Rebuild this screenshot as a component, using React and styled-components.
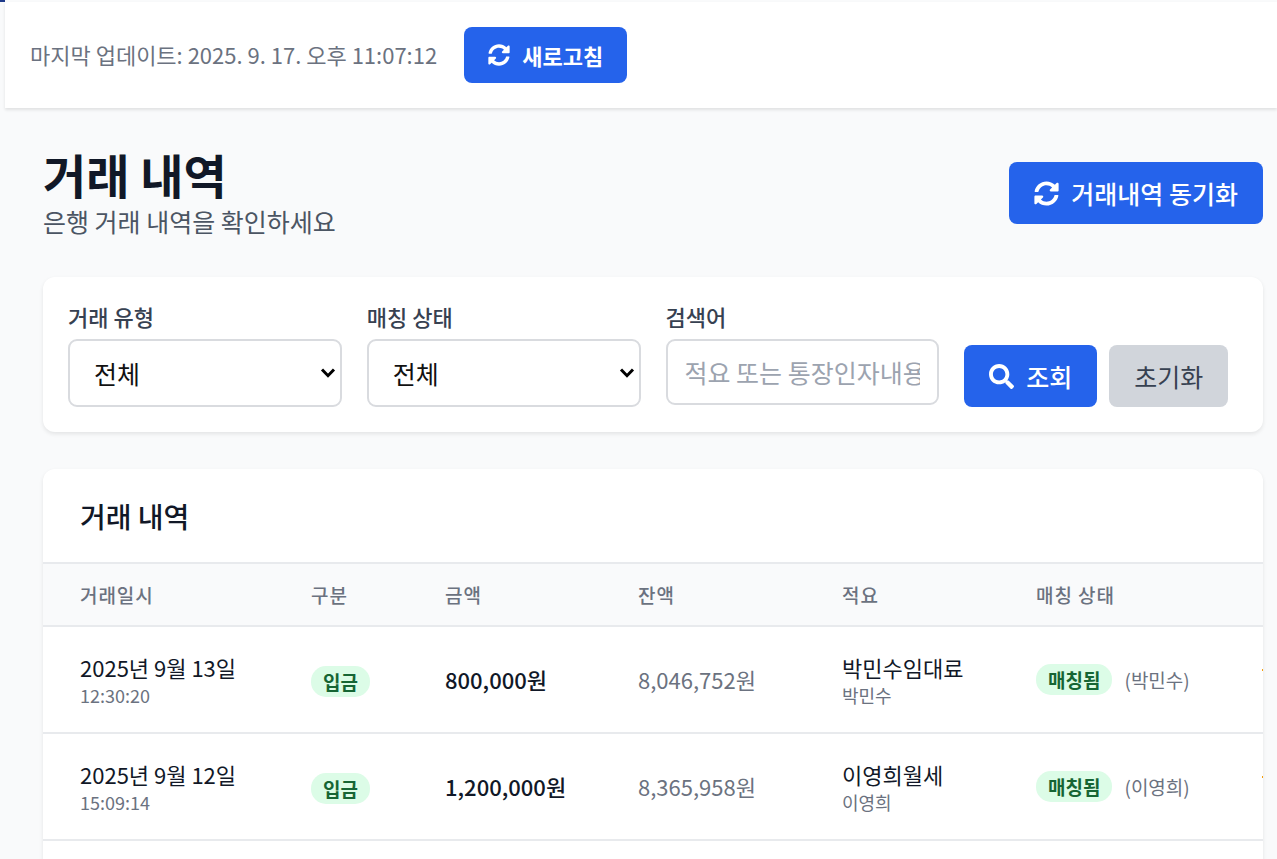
import React from "react";
import styled, { createGlobalStyle, css } from "styled-components";
import { FaSearch } from "react-icons/fa";

const GlobalStyle = createGlobalStyle`
  *, *::before, *::after { box-sizing: border-box; }
  html, body { margin: 0; background: #f9fafb; }
  body, button, input, select {
    font-family: "Noto Sans CJK KR", "Noto Sans", sans-serif;
  }
  body { overflow: hidden; color: #111827; }
  h1, h2, p { margin: 0; }
`;

const Shell = styled.div`
  display: flex;
  height: 100vh;
  overflow: hidden;
`;

const SidebarEdge = styled.div`
  flex: none;
  width: 5px;
  border-top: 2px solid #1e3a8a;
`;

const Content = styled.div`
  flex: 1;
  min-width: 0;
  padding-top: 2px;
`;

const TopBar = styled.header`
  display: flex;
  align-items: center;
  gap: 27px;
  padding: 25px;
  background: #fff;
  box-shadow: 0 2px 3px rgba(0, 0, 0, 0.1);
`;

const UpdatedAt = styled.span`
  font-size: 22px;
  line-height: 30px;
  padding-bottom: 2px;
  color: #6b7280;
`;

const tones = {
  primary: css`
    background: #2563eb;
    color: #fff;
  `,
  muted: css`
    background: #d1d5db;
    color: #374151;
    font-weight: 400;
  `,
};

const Button = styled.button`
  display: inline-flex;
  align-items: center;
  gap: 12px;
  border: 0;
  border-radius: 8px;
  padding: ${(p) => (p.$small ? "12px 24px" : "12px 25px")};
  font-size: ${(p) => (p.$small ? "22px" : "25px")};
  line-height: ${(p) => (p.$small ? "32px" : "38px")};
  font-weight: ${(p) => (p.$small ? 700 : 500)};
  white-space: nowrap;
  cursor: pointer;
  ${(p) => tones[p.$tone || "primary"]}

  svg {
    flex: none;
  }
`;

const Main = styled.main`
  padding: 37px 14px 0 38px;
`;

const PageHead = styled.div`
  display: flex;
  justify-content: space-between;
  align-items: center;
  margin-bottom: 36px;
`;

const PageTitle = styled.h1`
  font-size: 47px;
  line-height: 58px;
  font-weight: 700;
`;

const PageNote = styled.p`
  font-size: 25px;
  line-height: 36px;
  padding-bottom: 2px;
  color: #4b5563;
`;

const Card = styled.section`
  background: #fff;
  border-radius: 12px;
  box-shadow: 0 2px 4px rgba(0, 0, 0, 0.09);
  overflow: hidden;
`;

const Filters = styled(Card).attrs({ as: "form" })`
  display: grid;
  grid-template-columns: repeat(4, minmax(0, 1fr));
  gap: 25px;
  padding: 25px;
  margin-bottom: 37px;
`;

const Field = styled.div`
  display: flex;
  flex-direction: column;
`;

const Label = styled.label`
  font-size: 22px;
  line-height: 28px;
  margin-bottom: 9px;
  font-weight: 500;
  color: #374151;
`;

const control = css`
  width: 100%;
  border: 2px solid #d9dbdf;
  border-radius: 9px;
  background: #fff;
  font-size: 25px;
`;

const SelectWrap = styled.div`
  display: grid;
  align-items: center;

  > * {
    grid-area: 1 / 1;
  }

  > svg {
    justify-self: end;
    margin-right: 6px;
    pointer-events: none;
  }
`;

const Select = styled.select`
  ${control}
  appearance: none;
  height: 68px;
  padding: 0 24px;
  color: #111;
`;

const Input = styled.input`
  ${control}
  height: 66px;
  padding: 0 17px;

  &::placeholder {
    color: #9ca3af;
    opacity: 1;
  }
`;

const Actions = styled.div`
  display: flex;
  align-items: flex-end;
  gap: 12px;
`;

const CardHead = styled.div`
  padding: 25px 37px 24px;
  border-bottom: 2px solid #e8eaed;
`;

const CardTitle = styled.h2`
  font-size: 28px;
  line-height: 44px;
  font-weight: 500;
`;

const TableScroll = styled.div`
  overflow: hidden;
`;

const Table = styled.table`
  table-layout: fixed;
  width: 100%;
  min-width: 1380px;
  border-collapse: collapse;
`;

const Col = styled.col`
  width: ${(p) => p.$w};
`;

const Th = styled.th`
  padding: 18px 37px;
  background: #f9fafb;
  border-bottom: 2px solid #e8eaed;
  font-size: 19px;
  line-height: 25px;
  font-weight: 500;
  letter-spacing: 0.05em;
  text-align: left;
  white-space: nowrap;
  color: #6b7280;
`;

const Td = styled.td`
  height: 107px;
  padding: 0 37px;
  border-bottom: 2px solid #e8eaed;
  white-space: nowrap;
  font-size: 22px;
  line-height: 31px;
  font-weight: ${(p) => (p.$strong ? 500 : 400)};
  color: ${(p) => (p.$quiet ? "#6b7280" : "#111827")};
`;

const SubLine = styled.div`
  font-size: 18px;
  line-height: 24px;
  color: #6b7280;
`;

const Match = styled.div`
  display: flex;
  align-items: center;
  gap: 12px;
`;

const Badge = styled.span`
  display: inline-block;
  padding: 0 12px;
  border-radius: 15px;
  background: #dcfce7;
  color: #166534;
  font-size: 19px;
  line-height: 31px;
  font-weight: 600;
  vertical-align: middle;
`;

const MatchName = styled.span`
  font-size: 19px;
  line-height: 31px;
  color: #6b7280;
`;

const IconButton = styled.button`
  display: block;
  border: 0;
  padding: 0;
  background: none;
  color: #f59e0b;
  cursor: pointer;
`;

function SyncIcon({ size }) {
  return (
    <svg width={size} height={size} viewBox="0 0 512 512" fill="currentColor" aria-hidden="true">
      <path d="M370.7 133.3C339.5 104 298.9 88 255.8 88c-77.500.1-144.300 53.200-162.800 126.900-1.300 5.400-6.100 9.100-11.700 9.100H24.100c-7.500 0-13.200-6.800-11.800-14.200C33.900 94.900 134.800 8 256 8c66.400 0 126.800 26.100 171.300 68.700L463 41C478.100 25.900 504 36.600 504 57.900V192c0 13.300-10.700 24-24 24H345.900c-21.400 0-32.100-25.900-17-41zM32 296h134.100c21.400 0 32.100 25.900 17 41l-41.800 41.800c31.300 29.300 71.800 45.300 114.900 45.300 77.400-.1 144.300-53.100 162.800-126.800 1.300-5.400 6.100-9.100 11.700-9.100h57.300c7.500 0 13.200 6.800 11.800 14.200C478.100 417.100 377.200 504 256 504c-66.400 0-126.800-26.100-171.300-68.700L49 471c-15.100 15.100-41 4.400-41-17V320c0-13.300 10.700-24 24-24z" />
    </svg>
  );
}

function Chevron() {
  return (
    <svg width="16" height="12" viewBox="0 0 16 12" fill="none" stroke="#000" strokeWidth="3" aria-hidden="true">
      <path d="M2 2.500 8 8.700 14 2.500" />
    </svg>
  );
}

function UnlinkIcon() {
  return (
    <svg width="22" height="22" viewBox="0 0 22 22" fill="none" stroke="currentColor" strokeWidth="2" aria-hidden="true">
      <path d="M0 3H8M14 3H21M4 17H18" />
    </svg>
  );
}

const rows = [
  { date: "2025년 9월 13일", time: "12:30:20", amount: "800,000원", balance: "8,046,752원", memo: "박민수임대료", name: "박민수" },
  { date: "2025년 9월 12일", time: "15:09:14", amount: "1,200,000원", balance: "8,365,958원", memo: "이영희월세", name: "이영희" },
];

const columns = [
  { label: "거래일시", width: "231px" },
  { label: "구분", width: "134px" },
  { label: "금액", width: "193px" },
  { label: "잔액", width: "204px" },
  { label: "적요", width: "194px" },
  { label: "매칭 상태", width: "226px" },
];

function SelectField({ id, label }) {
  return (
    <Field>
      <Label htmlFor={id}>{label}</Label>
      <SelectWrap>
        <Select id={id} defaultValue="all">
          <option value="all">전체</option>
        </Select>
        <Chevron />
      </SelectWrap>
    </Field>
  );
}

export default function App() {
  return (
    <>
      <GlobalStyle />
      <Shell>
        <SidebarEdge />
        <Content>
          <TopBar>
            <UpdatedAt>마지막 업데이트: 2025. 9. 17. 오후 11:07:12</UpdatedAt>
            <Button type="button" $small>
              <SyncIcon size={22} />
              새로고침
            </Button>
          </TopBar>
          <Main>
            <PageHead>
              <div>
                <PageTitle>거래 내역</PageTitle>
                <PageNote>은행 거래 내역을 확인하세요</PageNote>
              </div>
              <Button type="button">
                <SyncIcon size={25} />
                거래내역 동기화
              </Button>
            </PageHead>

            <Filters onSubmit={(e) => e.preventDefault()}>
              <SelectField id="type" label="거래 유형" />
              <SelectField id="status" label="매칭 상태" />
              <Field>
                <Label htmlFor="keyword">검색어</Label>
                <Input id="keyword" type="text" placeholder="적요 또는 통장인자내용" />
              </Field>
              <Actions>
                <Button type="submit">
                  <FaSearch size={25} />
                  조회
                </Button>
                <Button type="reset" $tone="muted">초기화</Button>
              </Actions>
            </Filters>

            <Card>
              <CardHead>
                <CardTitle>거래 내역</CardTitle>
              </CardHead>
              <TableScroll>
                <Table>
                  <colgroup>
                    {columns.map((c) => (
                      <Col key={c.label} $w={c.width} />
                    ))}
                    <Col $w="auto" />
                  </colgroup>
                  <thead>
                    <tr>
                      {columns.map((c) => (
                        <Th key={c.label} scope="col">{c.label}</Th>
                      ))}
                      <Th as="td" />
                    </tr>
                  </thead>
                  <tbody>
                    {rows.map((r) => (
                      <tr key={r.time}>
                        <Td>
                          {r.date}
                          <SubLine>{r.time}</SubLine>
                        </Td>
                        <Td><Badge>입금</Badge></Td>
                        <Td $strong>{r.amount}</Td>
                        <Td $quiet>{r.balance}</Td>
                        <Td>
                          {r.memo}
                          <SubLine>{r.name}</SubLine>
                        </Td>
                        <Td>
                          <Match>
                            <Badge>매칭됨</Badge>
                            <MatchName>({r.name})</MatchName>
                          </Match>
                        </Td>
                        <Td>
                          <IconButton type="button" aria-label="매칭 취소"><UnlinkIcon /></IconButton>
                        </Td>
                      </tr>
                    ))}
                    <tr>
                      <Td colSpan={7} />
                    </tr>
                  </tbody>
                </Table>
              </TableScroll>
            </Card>
          </Main>
        </Content>
      </Shell>
    </>
  );
}
